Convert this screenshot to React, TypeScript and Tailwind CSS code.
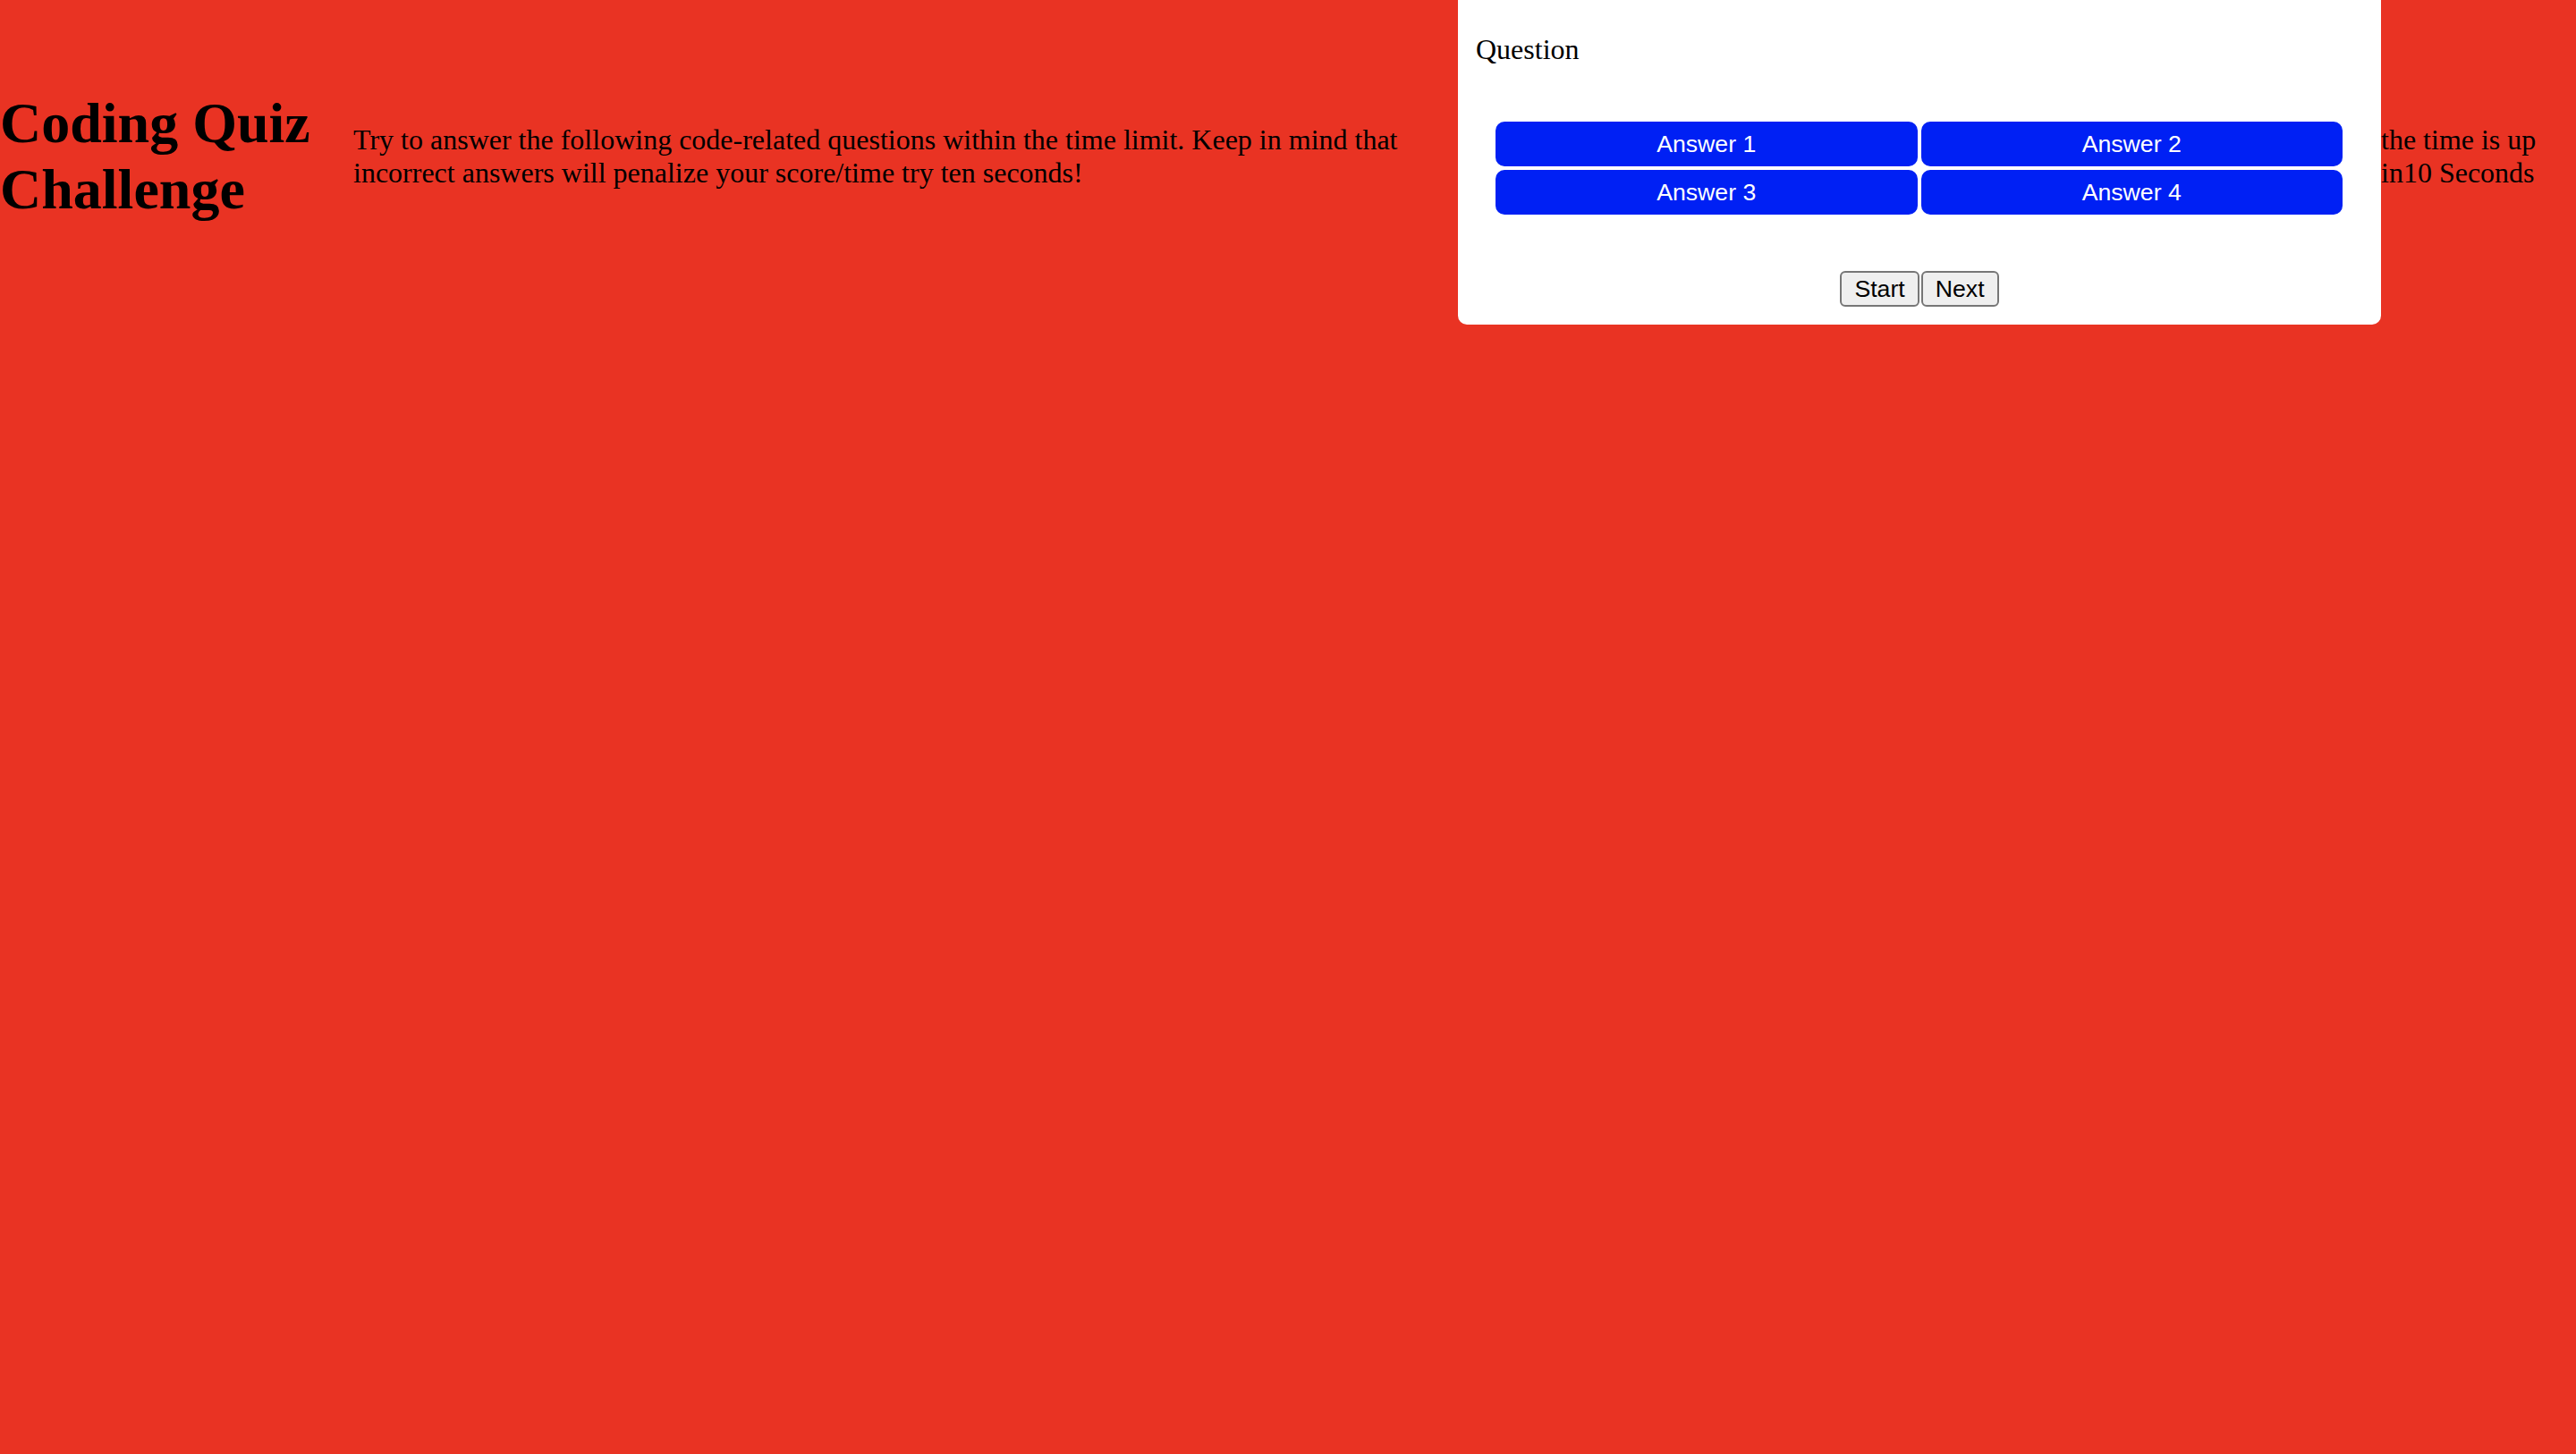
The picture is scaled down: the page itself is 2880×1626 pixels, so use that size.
export default function App() {
  const answers = ["Answer 1", "Answer 2", "Answer 3", "Answer 4"];

  return (
    <main
      className="min-h-[1626px] w-full bg-[#e93323] text-black overflow-hidden"
      style={{ fontFamily: '"Liberation Serif", "Times New Roman", serif' }}
    >
      <header className="flex h-[350px] items-center">
        {/* Title */}
        <h1 className="w-[395px] shrink-0 text-[64px] font-bold leading-[1.15]">
          Coding Quiz Challenge
        </h1>

        {/* Description */}
        <p className="w-[1235px] shrink-0 text-[32px] leading-[1.15]">
          Try to answer the following code-related questions within the time
          limit. Keep in mind that incorrect answers will penalize your
          score/time try ten seconds!
        </p>

        {/* Quiz card */}
        <section className="flex h-[376px] w-[1032px] shrink-0 flex-col rounded-[10px] bg-white p-[20px]">
          <p className="mb-[32px] mt-[30px] text-[32px] leading-[1.15]">Question</p>

          <div
            className="ml-[22px] mr-[23px] mt-[30px] grid grid-cols-2 gap-[4px]"
            style={{ fontFamily: '"Liberation Sans", Arial, sans-serif' }}
          >
            {answers.map((answer) => (
              <button
                key={answer}
                className="flex h-[50px] items-center justify-center rounded-[10px] bg-[#0020f4] text-[26.67px] text-white"
              >
                {answer}
              </button>
            ))}
          </div>

          <div
            className="mt-auto flex justify-center gap-[2px]"
            style={{ fontFamily: '"Liberation Sans", Arial, sans-serif' }}
          >
            <button className="h-[40px] rounded-[6px] border-2 border-[#767676] bg-[#efefef] px-[14px] text-[26.67px] leading-[30px]">
              Start
            </button>
            <button className="h-[40px] rounded-[6px] border-2 border-[#767676] bg-[#efefef] px-[14px] text-[26.67px] leading-[30px]">
              Next
            </button>
          </div>
        </section>

        {/* Timer */}
        <p className="flex-1 text-[32px] leading-[1.15]">
          the time is up in10 Seconds
        </p>
      </header>
    </main>
  );
}
